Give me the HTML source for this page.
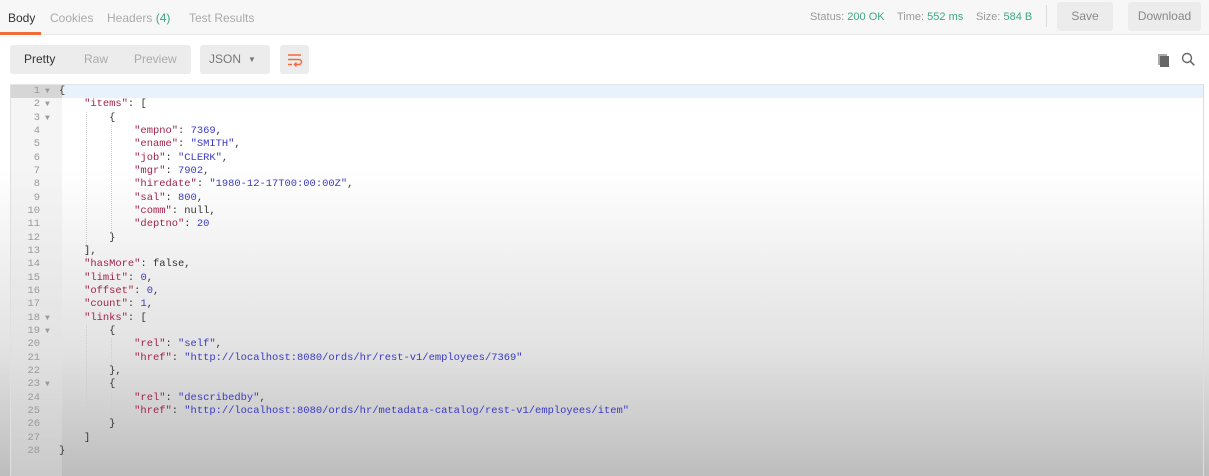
<!DOCTYPE html>
<html><head><meta charset="utf-8"><style>
*{margin:0;padding:0;box-sizing:border-box}
html,body{width:1209px;height:476px;overflow:hidden}
body{position:relative;font-family:"Liberation Sans",sans-serif;background:linear-gradient(to bottom,#fff 0,#fff 170px,#f0f0f0 260px,#e2e2e2 350px,#bdbdbd 476px)}
.top{position:absolute;left:0;top:0;width:1209px;height:35px;background:#f7f7f7;border-bottom:1px solid #e8e8e8}
.tab{position:absolute;top:11px;font-size:12px;color:#aaa}
.ul{position:absolute;left:0;top:32px;width:41px;height:3px;background:#f26b3a}
.st{position:absolute;top:11px;font-size:11px;color:#999}
.st b{color:#3ea882;font-weight:normal}
.btn{position:absolute;background:#ececec;border-radius:3px;font-size:12px;color:#888;text-align:center}
.ed{position:absolute;left:10px;top:84px;width:1194px;height:392px;border-left:1px solid #ddd;border-top:1px solid #e4e4e4;border-right:1px solid #ddd}
.gut{position:absolute;left:10px;top:85px;width:52px;height:391px;background:rgba(225,225,225,.35)}
.act{position:absolute;left:62px;top:85px;width:1141px;height:13px;background:#e8f2fc}
.gact{position:absolute;left:11px;top:85px;width:51px;height:13px;background:#d6d6d6}
.code{position:absolute;left:0;top:85px;width:1200px;height:390px;font-family:"Liberation Mono",monospace;font-size:10.45px;line-height:13.33px}
.ln{position:absolute;left:0;width:40px;text-align:right;color:#999}
.ar{position:absolute;left:45px;color:#999;font-size:8px}
.tx{position:absolute;left:59px;top:0;color:#333;white-space:pre}
.k{color:#a3224a}.s{color:#3a3ac2}.n{color:#3a3ac2}
.g{position:absolute;width:1px;border-left:1px dotted #ccc}
</style></head><body>
<div class="top"></div>
<div class="tab" style="left:8px;color:#333">Body</div>
<div class="tab" style="left:50px">Cookies</div>
<div class="tab" style="left:107px">Headers <span style="color:#3ea882">(4)</span></div>
<div class="tab" style="left:189px">Test Results</div>
<div class="ul"></div>
<div class="st" style="left:810px">Status: <b>200 OK</b></div>
<div class="st" style="left:897px">Time: <b>552 ms</b></div>
<div class="st" style="left:976px">Size: <b>584 B</b></div>
<div style="position:absolute;left:1046px;top:5px;width:1px;height:22px;background:#ddd"></div>
<div class="btn" style="left:1057px;top:2px;width:56px;height:29px;line-height:29px">Save</div>
<div class="btn" style="left:1128px;top:2px;width:73px;height:29px;line-height:29px">Download</div>
<div class="btn" style="left:10px;top:45px;width:181px;height:29px;line-height:29px;text-align:left;font-size:12px"><span style="position:absolute;left:14px;color:#333">Pretty</span><span style="position:absolute;left:74px;color:#aaa">Raw</span><span style="position:absolute;left:124px;color:#aaa">Preview</span></div>
<div class="btn" style="left:200px;top:45px;width:70px;height:29px;line-height:29px;text-align:left"><span style="position:absolute;left:9px;color:#777">JSON</span><span style="position:absolute;left:48px;color:#777;font-size:8px">▼</span></div>
<div class="btn" style="left:280px;top:45px;width:29px;height:29px">
<svg width="29" height="29" viewBox="0 0 29 29"><g stroke="#f26b3a" stroke-width="1.5" fill="none"><path d="M8 10h13M8 14.5h11a2.5 2.5 0 0 1 0 5h-4M8 19.5h4M16.5 17.5l-2 2 2 2"/></g></svg></div>
<svg style="position:absolute;left:1156px;top:53px" width="14" height="14" viewBox="0 0 14 14"><rect x="2" y="1" width="9" height="11" fill="#aaa"/><rect x="4" y="3" width="9" height="11" fill="#666"/></svg>
<svg style="position:absolute;left:1181px;top:52px" width="15" height="15" viewBox="0 0 15 15"><circle cx="6" cy="6" r="4.5" stroke="#666" stroke-width="1.4" fill="none"/><path d="M9.3 9.3l4 4" stroke="#666" stroke-width="1.5"/></svg>
<div class="ed"></div>
<div class="gut"></div>
<div class="gact"></div>
<div class="act"></div>
<div class="g" style="left:86px;top:112px;height:147px"></div>
<div class="g" style="left:111px;top:125px;height:107px"></div>
<div class="g" style="left:86px;top:325px;height:107px"></div>
<div class="g" style="left:111px;top:338px;height:27px"></div>
<div class="g" style="left:111px;top:392px;height:27px"></div>
<div class="code"><div class="ln" style="top:0">1</div><div class="ar" style="top:0">▼</div><div class="ln" style="top:13.33px">2</div><div class="ar" style="top:13.33px">▼</div><div class="ln" style="top:26.67px">3</div><div class="ar" style="top:26.67px">▼</div><div class="ln" style="top:40px">4</div><div class="ln" style="top:53.33px">5</div><div class="ln" style="top:66.67px">6</div><div class="ln" style="top:80px">7</div><div class="ln" style="top:93.33px">8</div><div class="ln" style="top:106.67px">9</div><div class="ln" style="top:120px">10</div><div class="ln" style="top:133.33px">11</div><div class="ln" style="top:146.67px">12</div><div class="ln" style="top:160px">13</div><div class="ln" style="top:173.33px">14</div><div class="ln" style="top:186.67px">15</div><div class="ln" style="top:200px">16</div><div class="ln" style="top:213.33px">17</div><div class="ln" style="top:226.67px">18</div><div class="ar" style="top:226.67px">▼</div><div class="ln" style="top:240px">19</div><div class="ar" style="top:240px">▼</div><div class="ln" style="top:253.33px">20</div><div class="ln" style="top:266.67px">21</div><div class="ln" style="top:280px">22</div><div class="ln" style="top:293.33px">23</div><div class="ar" style="top:293.33px">▼</div><div class="ln" style="top:306.67px">24</div><div class="ln" style="top:320px">25</div><div class="ln" style="top:333.33px">26</div><div class="ln" style="top:346.67px">27</div><div class="ln" style="top:360px">28</div><div class="tx">{
    <span class="k">"items"</span>: [
        {
            <span class="k">"empno"</span>: <span class="n">7369</span>,
            <span class="k">"ename"</span>: <span class="s">"SMITH"</span>,
            <span class="k">"job"</span>: <span class="s">"CLERK"</span>,
            <span class="k">"mgr"</span>: <span class="n">7902</span>,
            <span class="k">"hiredate"</span>: <span class="s">"1980-12-17T00:00:00Z"</span>,
            <span class="k">"sal"</span>: <span class="n">800</span>,
            <span class="k">"comm"</span>: null,
            <span class="k">"deptno"</span>: <span class="n">20</span>
        }
    ],
    <span class="k">"hasMore"</span>: false,
    <span class="k">"limit"</span>: <span class="n">0</span>,
    <span class="k">"offset"</span>: <span class="n">0</span>,
    <span class="k">"count"</span>: <span class="n">1</span>,
    <span class="k">"links"</span>: [
        {
            <span class="k">"rel"</span>: <span class="s">"self"</span>,
            <span class="k">"href"</span>: <span class="s">"http://localhost:8080/ords/hr/rest-v1/employees/7369"</span>
        },
        {
            <span class="k">"rel"</span>: <span class="s">"describedby"</span>,
            <span class="k">"href"</span>: <span class="s">"http://localhost:8080/ords/hr/metadata-catalog/rest-v1/employees/item"</span>
        }
    ]
}</div></div>
</body></html>
